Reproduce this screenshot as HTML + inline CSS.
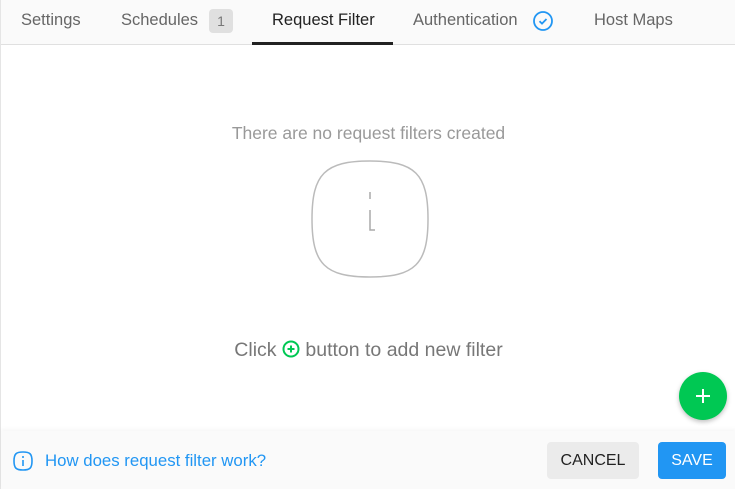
<!DOCTYPE html>
<html><head><style>
*{margin:0;padding:0;box-sizing:border-box}
body{width:735px;height:489px;background:#fff;font-family:"Liberation Sans",sans-serif;position:relative;overflow:hidden;border-left:1px solid #e5e5e5}
.hdr{position:absolute;left:0;top:0;width:735px;height:45px;background:#fafafa;border-bottom:1px solid #e0e0e0}
.t{position:absolute;top:11px;font-size:16.5px;color:#666}
.badge{position:absolute;left:208px;top:9px;width:24px;height:24px;background:#e0e0e0;border-radius:4px;color:#777;font-size:14px;text-align:center;line-height:24px}
.ul{position:absolute;left:251px;top:42px;width:141px;height:3px;background:#222}
.msg{position:absolute;left:0;width:735px;text-align:center;color:#999;font-size:17.5px}
.ftr{position:absolute;left:0;top:431px;width:735px;height:58px;background:#fafafa;box-shadow:0 -2px 4px rgba(0,0,0,0.04)}
.btn{position:absolute;top:11px;height:37px;border-radius:4px;font-size:16px;line-height:37px;text-align:center}
</style></head><body>
<div class="hdr">
<div class="t" style="left:20px">Settings</div>
<div class="t" style="left:120px">Schedules</div>
<div class="badge">1</div>
<div class="t" style="left:271px;color:#222">Request Filter</div>
<div class="t" style="left:412px">Authentication</div>
<svg style="position:absolute;left:531px;top:10px" width="22" height="22" viewBox="0 0 22 22"><circle cx="11" cy="11" r="9" fill="none" stroke="#2196f3" stroke-width="1.8"/><path d="M7.5 11.2l2.5 2.4 4.5-4.6" fill="none" stroke="#2196f3" stroke-width="1.8"/></svg>
<div class="t" style="left:593px">Host Maps</div>
<div class="ul"></div>
</div>
<div class="msg" style="top:123px">There are no request filters created</div>
<svg style="position:absolute;left:310px;top:160px" width="118" height="118" viewBox="0 0 118 118"><path d="M59 1C14 1 1 14 1 59s13 58 58 58 58-13 58-58S104 1 59 1z" fill="none" stroke="#bbb" stroke-width="1.5"/><path d="M59 32v7M59 50v20h5" fill="none" stroke="#aaa" stroke-width="1.5"/></svg>
<div class="msg" style="top:339px;font-size:19.5px;color:#777">Click <svg style="vertical-align:-2px" width="18" height="18" viewBox="0 0 18 18"><circle cx="9" cy="9" r="7.5" fill="none" stroke="#00c853" stroke-width="2"/><path d="M9 5.5v7M5.5 9h7" stroke="#00c853" stroke-width="2"/></svg> button to add new filter</div>
<div style="position:absolute;left:678px;top:372px;width:48px;height:48px;border-radius:50%;background:#00c853;box-shadow:0 2px 5px rgba(0,0,0,0.25)"><svg width="48" height="48" viewBox="0 0 48 48"><path d="M24 17v14M17 24h14" stroke="#fff" stroke-width="2"/></svg></div>
<div class="ftr">
<svg style="position:absolute;left:12px;top:20px" width="20" height="20" viewBox="0 0 20 20"><path d="M10 1C3 1 1 3 1 10s2 9 9 9 9-2 9-9-2-9-9-9z" fill="none" stroke="#2196f3" stroke-width="1.6"/><path d="M10 5v2M10 9v6" stroke="#2196f3" stroke-width="1.6"/></svg>
<div style="position:absolute;left:44px;top:20px;font-size:16.8px;color:#2196f3">How does request filter work?</div>
<div class="btn" style="left:546px;width:92px;background:#ebebeb;color:#222">CANCEL</div>
<div class="btn" style="left:657px;width:68px;background:#2196f3;color:#fff">SAVE</div>
</div>
</body></html>
